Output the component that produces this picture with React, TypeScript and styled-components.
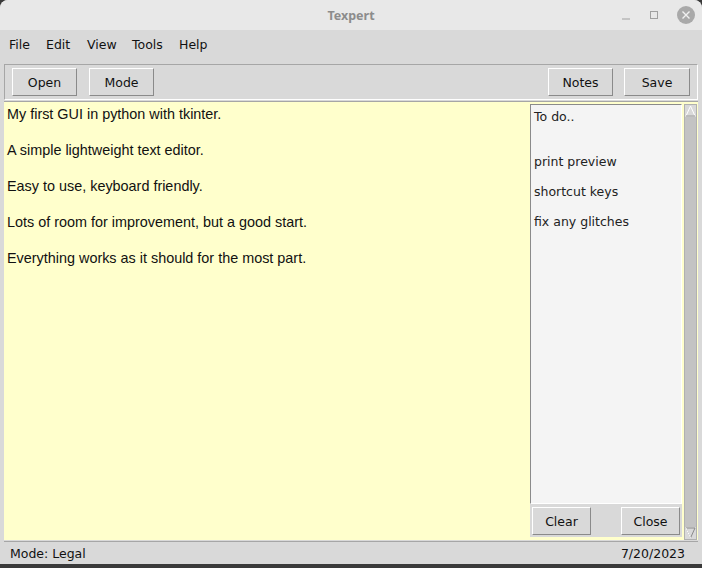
import React from "react";
import styled, { createGlobalStyle } from "styled-components";

const Global = createGlobalStyle`
  html, body { margin: 0; padding: 0; background: #3a3a3a; }
  body { width: 702px; height: 568px; overflow: hidden; }
  #root { width: 702px; height: 568px; }
`;

const Window = styled.div`
  width: 702px;
  height: 564px;
  display: flex;
  flex-direction: column;
  background: #d9d9d9;
  border-radius: 8px 8px 0 0;
  overflow: hidden;
  font-family: "DejaVu Sans", sans-serif;
`;

const TitleBar = styled.div`
  height: 30px;
  flex: none;
  background: #e8e8e8;
  position: relative;
  display: flex;
  align-items: center;
  justify-content: center;
`;

const Title = styled.div`
  color: #8c8c8c;
  font-size: 12.5px;
  font-weight: bold;
  font-family: "Noto Sans", "DejaVu Sans", sans-serif;
`;

const TitleControls = styled.div`
  position: absolute;
  right: 7px;
  top: 6px;
  display: flex;
  align-items: center;
  gap: 14px;
`;

const CtrlIcon = styled.svg`
  display: block;
`;

const MenuBar = styled.div`
  height: 28px;
  flex: none;
  display: flex;
  align-items: center;
  padding-left: 9px;
  font-size: 12.5px;
  color: #111;
`;

const MenuItem = styled.span<{ $w: number }>`
  width: ${(p) => p.$w}px;
`;

const Toolbar = styled.div`
  margin: 6px 4px 0 4px;
  height: 36px;
  flex: none;
  border-top: 1px solid #a6a6a6;
  border-left: 1px solid #a6a6a6;
  border-bottom: 1px solid #fff;
  border-right: 1px solid #fff;
  box-sizing: border-box;
  display: flex;
  align-items: center;
  padding: 0 7px;
  gap: 12px;
`;

const RightGroup = styled.div`
  margin-left: auto;
  display: flex;
  gap: 11px;
`;

const TkButton = styled.button<{ $w: number }>`
  width: ${(p) => p.$w}px;
  height: 28px;
  box-sizing: border-box;
  background: #d9d9d9;
  border-top: 1px solid #fff;
  border-left: 1px solid #fff;
  border-right: 1px solid #8a8a8a;
  border-bottom: 1px solid #8a8a8a;
  font-family: "DejaVu Sans", sans-serif;
  font-size: 12.5px;
  color: #111;
  padding: 0;
  margin: 0;
`;

const Main = styled.div`
  flex: 1;
  display: flex;
  margin: 1px 4px 0 4px;
  border-top: 1px solid #a6a6a6;
  background: #ffffcc;
  min-height: 0;
`;

const Editor = styled.div`
  flex: 1;
  padding: 3px 3px;
  font-family: "Liberation Sans", Arial, sans-serif;
  font-size: 14.4px;
  line-height: 18px;
  color: #111;
`;

const EditorLine = styled.div`
  height: 36px;
`;

const NotesFrame = styled.div`
  width: 152px;
  margin: 2px 2px 3px 0;
  display: flex;
  flex-direction: column;
  background: #d9d9d9;
`;

const NotesText = styled.div`
  flex: 1;
  background: #f4f4f4;
  border-top: 1px solid #8a8a8a;
  border-left: 1px solid #8a8a8a;
  border-right: 1px solid #fff;
  border-bottom: 1px solid #fff;
  padding: 4px 3px;
  font-family: "DejaVu Sans", sans-serif;
  font-size: 12.5px;
  line-height: 15px;
  color: #222;
`;

const NotesLine = styled.div`
  height: 15px;
  white-space: pre;
`;

const NotesButtons = styled.div`
  height: 33px;
  display: flex;
  align-items: flex-start;
  justify-content: space-between;
  padding: 3px 2px 0 2px;
  box-sizing: border-box;
`;

const Scrollbar = styled.div`
  width: 13px;
  margin: 2px 1px 0 0;
  background: #c3c3c3;
  display: flex;
  flex-direction: column;
  justify-content: space-between;
  border: 1px solid #b0b0b0;
  box-sizing: border-box;
`;

const Arrow = styled.svg`
  display: block;
`;

const StatusBar = styled.div`
  height: 22px;
  flex: none;
  margin: 1px 4px 0 4px;
  border-top: 1px solid #a6a6a6;
  display: flex;
  align-items: center;
  justify-content: space-between;
  padding: 0 13px 0 6px;
  font-size: 12.5px;
  color: #111;
`;

const editorLines = [
  "My first GUI in python with tkinter.",
  "A simple lightweight text editor.",
  "Easy to use, keyboard friendly.",
  "Lots of room for improvement, but a good start.",
  "Everything works as it should for the most part.",
];

const notes = ["To do..", "", "", "print preview", "", "shortcut keys", "", "fix any glitches"];

export default function App() {
  return (
    <>
      <Global />
      <Window>
        <TitleBar>
          <Title>Texpert</Title>
          <TitleControls>
            <CtrlIcon width="10" height="10" viewBox="0 0 10 10">
              <line x1="1" y1="9" x2="9" y2="9" stroke="#a0a0a0" strokeWidth="1" />
            </CtrlIcon>
            <CtrlIcon width="18" height="10" viewBox="0 0 18 10">
              <rect x="5.5" y="1.5" width="7" height="7" fill="none" stroke="#a0a0a0" strokeWidth="1" />
            </CtrlIcon>
            <CtrlIcon width="18" height="18" viewBox="0 0 18 18">
              <circle cx="9" cy="9" r="9" fill="#a9a9a9" />
              <path d="M5.5 5.5 L12.5 12.5 M12.5 5.5 L5.5 12.5" stroke="#f0f0f0" strokeWidth="1.4" />
            </CtrlIcon>
          </TitleControls>
        </TitleBar>
        <MenuBar>
          <MenuItem $w={37}>File</MenuItem>
          <MenuItem $w={41}>Edit</MenuItem>
          <MenuItem $w={45}>View</MenuItem>
          <MenuItem $w={47}>Tools</MenuItem>
          <MenuItem $w={40}>Help</MenuItem>
        </MenuBar>
        <Toolbar>
          <TkButton $w={65}>Open</TkButton>
          <TkButton $w={65}>Mode</TkButton>
          <RightGroup>
            <TkButton $w={65}>Notes</TkButton>
            <TkButton $w={66}>Save</TkButton>
          </RightGroup>
        </Toolbar>
        <Main>
          <Editor>
            {editorLines.map((l) => (
              <EditorLine key={l}>{l}</EditorLine>
            ))}
          </Editor>
          <NotesFrame>
            <NotesText>
              {notes.map((n, i) => (
                <NotesLine key={i}>{n}</NotesLine>
              ))}
            </NotesText>
            <NotesButtons>
              <TkButton $w={59}>Clear</TkButton>
              <TkButton $w={59}>Close</TkButton>
            </NotesButtons>
          </NotesFrame>
          <Scrollbar>
            <Arrow width="11" height="12" viewBox="0 0 11 12">
              <rect width="11" height="12" fill="#d9d9d9" />
              <path d="M5.5 1 L10 11 L1 11 Z" fill="#d9d9d9" stroke="#fff" strokeWidth="1" />
              <path d="M10 11 L1 11" stroke="#8a8a8a" strokeWidth="1" />
            </Arrow>
            <Arrow width="11" height="12" viewBox="0 0 11 12">
              <rect width="11" height="12" fill="#d9d9d9" />
              <path d="M1 1 L10 1 L5.5 11 Z" fill="#d9d9d9" stroke="#8a8a8a" strokeWidth="1" />
              <path d="M1 1 L5.5 11" stroke="#fff" strokeWidth="1" />
            </Arrow>
          </Scrollbar>
        </Main>
        <StatusBar>
          <span>Mode: Legal</span>
          <span>7/20/2023</span>
        </StatusBar>
      </Window>
    </>
  );
}
